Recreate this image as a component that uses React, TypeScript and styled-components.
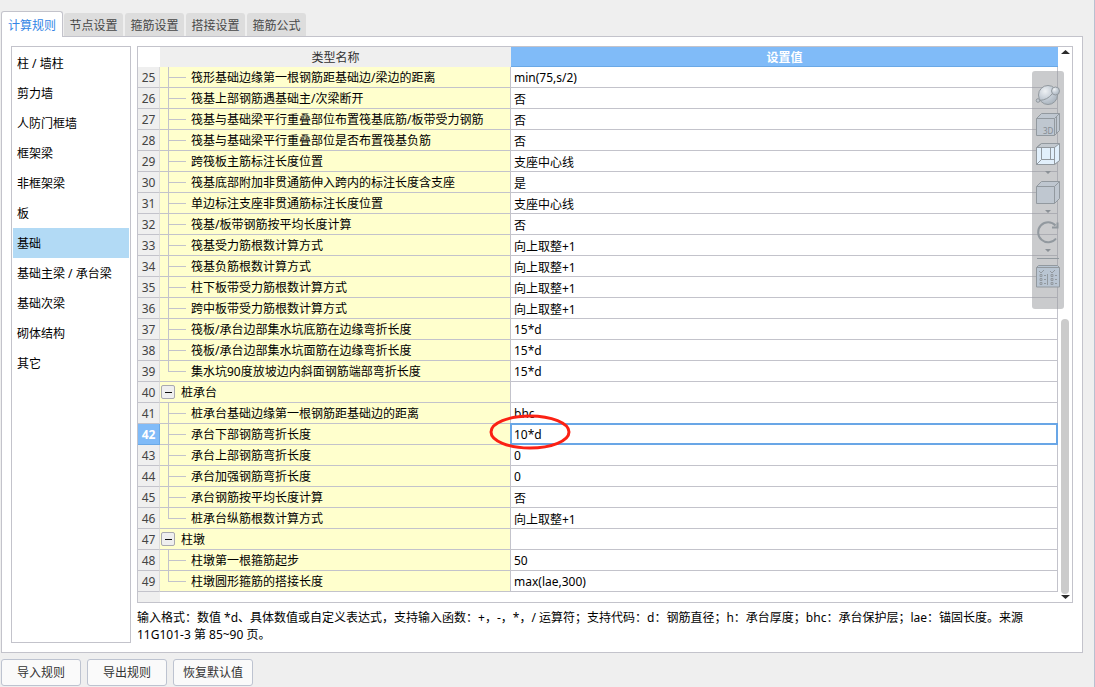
import React, { useState } from "react";
import styled, { createGlobalStyle, css } from "styled-components";

const line = "#c3c3cb";
const blue = "#80bbf8";

const GlobalStyle = createGlobalStyle`
  *, *::before, *::after { box-sizing: border-box; }
  body {
    margin: 0;
    background: #efefef;
    color: #000;
    font: 12px/20px "Noto Sans", "Noto Sans CJK SC", sans-serif;
  }
  button { font: inherit; color: inherit; cursor: pointer; }
`;

const Window = styled.main`
  display: flex;
  flex-direction: column;
  min-height: 100vh;
  padding: 11px 11px 2px 1px;
  border-right: 1px solid #b9c0d0;
  overflow: hidden;
`;

const Tabs = styled.div`
  display: flex;
  align-items: flex-end;
  gap: 2px;
  height: 26px;
`;

const Tab = styled.button<{ $active: boolean }>`
  width: 59px;
  height: 23px;
  padding: 2px 0 0;
  margin-bottom: 1px;
  border: 0;
  border-radius: 3px 3px 0 0;
  background: #dddddd;
  color: #484848;
  ${(p) =>
    p.$active &&
    css`
      position: relative;
      width: 62px;
      height: 26px;
      margin-bottom: 0;
      margin-right: -1px;
      border: 1px solid ${line};
      border-bottom: 0;
      background: #fff;
      color: #3385e5;
    `}
`;

const Panel = styled.section`
  display: flex;
  flex: 1;
  gap: 6px;
  margin-top: -1px;
  padding: 9px;
  border: 1px solid ${line};
  background: #fff;
`;

const Categories = styled.nav`
  display: flex;
  flex-direction: column;
  flex: none;
  width: 120px;
  padding: 1px;
  border: 1px solid ${line};
`;

const Category = styled.button<{ $selected: boolean }>`
  height: 30px;
  padding: 2px 4px 0;
  border: 0;
  background: ${(p) => (p.$selected ? "#b2daf5" : "#fff")};
  text-align: left;
`;

const Content = styled.div`
  flex: 1;
  min-width: 0;
`;

const GridFrame = styled.div`
  position: relative;
  display: flex;
  border: 1px solid ${line};
`;

const Sheet = styled.table`
  flex: 1;
  border-collapse: separate;
  border-spacing: 0;
  table-layout: fixed;
`;

const NumberCol = styled.col`
  width: 22px;
`;
const NameCol = styled.col`
  width: 351px;
`;

const HeadCell = styled.th<{ $active?: boolean }>`
  height: 20px;
  padding: 2px 0 0;
  line-height: 17px;
  font-weight: ${(p) => (p.$active ? 700 : 400)};
  background: ${(p) => (p.$active ? blue : "#efefef")};
  color: ${(p) => (p.$active ? "#fff" : "#333")};
  border-bottom: 1px solid ${(p) => (p.$active ? "#6aa8e6" : "#efefef")};
`;

const Corner = styled.td`
  padding: 0;
  background: #fff;
`;

const RowNumber = styled.th<{ $active: boolean }>`
  height: 21px;
  padding: 2px 0 0;
  line-height: 18px;
  font-weight: ${(p) => (p.$active ? 700 : 400)};
  color: ${(p) => (p.$active ? "#fff" : "#444")};
  background: ${(p) => (p.$active ? blue : "#efefef")};
  border-bottom: 1px solid ${(p) => (p.$active ? "#6aa8e6" : line)};
  border-right: 1px solid ${(p) => (p.$active ? "#6aa8e6" : "#dcdcdc")};
`;

const NameCell = styled.td`
  height: 21px;
  padding: 0;
  background: #ffffcd;
  border-right: 1px solid ${line};
  border-bottom: 1px solid ${line};
`;

const NameLine = styled.div`
  display: flex;
  align-items: center;
  height: 20px;
  white-space: nowrap;
`;

const NameText = styled.span`
  padding-top: 2px;
  line-height: 18px;
`;

const Branch = styled.span<{ $last: boolean }>`
  flex: none;
  width: 18px;
  height: 20px;
  margin: 0 5px 0 8px;
  background:
    linear-gradient(${line}, ${line}) 0 0 / 1px ${(p) => (p.$last ? "11px" : "20px")} no-repeat,
    linear-gradient(${line}, ${line}) 0 10px / 18px 1px no-repeat;
`;

const Toggle = styled.button`
  flex: none;
  display: flex;
  align-items: center;
  justify-content: center;
  width: 14px;
  height: 14px;
  margin: 0 6px 0 1px;
  padding: 0;
  border: 1px solid #a9a9b0;
  border-radius: 2px;
  background: #efefef;
  &::before {
    content: "";
    width: 7px;
    height: 1px;
    background: #111;
  }
`;

const ValueCell = styled.td`
  height: 21px;
  padding: 0;
  border-right: 1px solid ${line};
  border-bottom: 1px solid ${line};
`;

const ValueInput = styled.input<{ $active: boolean }>`
  display: block;
  width: 100%;
  height: 20px;
  padding: 1px 3px 0;
  border: 0;
  outline: 0;
  background: transparent;
  color: #000;
  font: inherit;
  line-height: 18px;
  box-shadow: ${(p) => (p.$active ? "0 0 0 1px #69a6e6, inset 0 0 0 1px #69a6e6" : "none")};
`;

const FootCell = styled.td<{ $gutter?: boolean }>`
  height: 10px;
  padding: 0;
  background: ${(p) => (p.$gutter ? "#efefef" : "#fff")};
`;

const Scrollbar = styled.div`
  display: flex;
  flex-direction: column;
  align-items: center;
  flex: none;
  width: 14px;
  padding: 3px 0;
`;

const Track = styled.div`
  display: flex;
  flex: 1;
  align-items: flex-end;
  padding-bottom: 1px;
`;

const Thumb = styled.div`
  width: 8px;
  height: 51%;
  border-radius: 4px;
  background: #cbcbcb;
`;

const ViewTools = styled.div`
  position: absolute;
  top: 24px;
  right: 8px;
  display: flex;
  flex-direction: column;
  width: 32px;
  height: 238px;
  border-radius: 3px;
  background: rgba(150, 152, 155, 0.5);
`;

const Ring = styled.svg`
  position: absolute;
  top: 366px;
  left: 351px;
  pointer-events: none;
`;

const Hint = styled.p`
  margin: 6px 0 0;
  padding-right: 32px;
  line-height: 17px;
`;

const Actions = styled.footer`
  display: flex;
  gap: 6px;
  padding-top: 6px;
`;

const ActionButton = styled.button`
  width: 80px;
  height: 27px;
  padding: 0;
  border: 1px solid #bdc3d0;
  border-radius: 3px;
  background: #fafafa;
  color: #333;
`;

const tabs = ["计算规则", "节点设置", "箍筋设置", "搭接设置", "箍筋公式"];
const categories = ["柱 / 墙柱", "剪力墙", "人防门框墙", "框架梁", "非框架梁", "板", "基础", "基础主梁 / 承台梁", "基础次梁", "砌体结构", "其它"];

type Kind = "item" | "last" | "group";
type Row = [number, string, string, Kind];

const rows: Row[] = [
  [25, "筏形基础边缘第一根钢筋距基础边/梁边的距离", "min(75,s/2)", "item"],
  [26, "筏基上部钢筋遇基础主/次梁断开", "否", "item"],
  [27, "筏基与基础梁平行重叠部位布置筏基底筋/板带受力钢筋", "否", "item"],
  [28, "筏基与基础梁平行重叠部位是否布置筏基负筋", "否", "item"],
  [29, "跨筏板主筋标注长度位置", "支座中心线", "item"],
  [30, "筏基底部附加非贯通筋伸入跨内的标注长度含支座", "是", "item"],
  [31, "单边标注支座非贯通筋标注长度位置", "支座中心线", "item"],
  [32, "筏基/板带钢筋按平均长度计算", "否", "item"],
  [33, "筏基受力筋根数计算方式", "向上取整+1", "item"],
  [34, "筏基负筋根数计算方式", "向上取整+1", "item"],
  [35, "柱下板带受力筋根数计算方式", "向上取整+1", "item"],
  [36, "跨中板带受力筋根数计算方式", "向上取整+1", "item"],
  [37, "筏板/承台边部集水坑底筋在边缘弯折长度", "15*d", "item"],
  [38, "筏板/承台边部集水坑面筋在边缘弯折长度", "15*d", "item"],
  [39, "集水坑90度放坡边内斜面钢筋端部弯折长度", "15*d", "last"],
  [40, "桩承台", "", "group"],
  [41, "桩承台基础边缘第一根钢筋距基础边的距离", "bhc", "item"],
  [42, "承台下部钢筋弯折长度", "10*d", "item"],
  [43, "承台上部钢筋弯折长度", "0", "item"],
  [44, "承台加强钢筋弯折长度", "0", "item"],
  [45, "承台钢筋按平均长度计算", "否", "item"],
  [46, "桩承台纵筋根数计算方式", "向上取整+1", "last"],
  [47, "柱墩", "", "group"],
  [48, "柱墩第一根箍筋起步", "50", "item"],
  [49, "柱墩圆形箍筋的搭接长度", "max(lae,300)", "last"],
];

const Arrow = ({ down }: { down?: boolean }) => (
  <svg width="9" height="4" aria-hidden="true">
    <path d={down ? "M0 0h9L4.500 4z" : "M0 4h9L4.500 0z"} fill="#2b2b2b" />
  </svg>
);

const ViewIcons = () => (
  <svg width="32" height="238" fill="none" stroke="#92999f" role="img" aria-label="视图工具">
    <defs>
      <radialGradient id="ball" cx="0.35" cy="0.3" r="0.75">
        <stop offset="0" stopColor="#eef1f4" />
        <stop offset="0.55" stopColor="#c5cdd6" />
        <stop offset="1" stopColor="#a9b3bd" />
      </radialGradient>
    </defs>
    <circle cx="16" cy="24" r="9.500" fill="url(#ball)" />
    <circle cx="6" cy="29.500" r="1.800" fill="#c4cad0" />
    <path d="M7.500 29.500C13 29 17 27 20 23" />
    <circle cx="23.500" cy="20" r="4" fill="url(#ball)" />
    <g strokeLinejoin="round">
      <path d="M4.500 47.500l5-5h18v17l-5 5h-18z" fill="#bfc7d0" />
      <path d="M4.500 47.500h18v17M22.500 47.500l5-5M24.500 45.500v17" />
      <path d="M4.500 76.500l5-4h18v17l-5 4h-18z" fill="#c3c9cf" />
      <path d="M4.500 76.500h18v17h-18zM22.500 76.500l5-4v17l-5 4z" fill="#e2f0fc" />
      <path d="M9.500 77v11.500h12.500M9.500 88.500l-5 5M18.500 77v12M9.500 72.500l-5 4" />
      <path d="M4.500 115.500l5-5h18v17l-5 5h-18z" fill="#bfc7d0" />
      <path d="M4.500 115.500h18v17M22.500 115.500l5-5" />
    </g>
    <text x="11" y="63" fontSize="8" fill="#858c93" stroke="none">3D</text>
    <path d="M13 100h6l-3 3zM13 139h6l-3 3zM13 178h6l-3 3z" fill="#8b9197" stroke="none" />
    <path d="M23.500 154.500A10 10 0 1 0 24 167.500" strokeWidth="2" />
    <path d="M20 156.500h5.500v-5" strokeWidth="2" />
    <path d="M5 187.500h22" />
    <path d="M4.500 196.500l2-2h19l2 2v19.500h-23z" fill="#b9c5d2" />
    <path d="M4.500 196.500h23M15.500 203v11M7 200l2 2 3-3M18 200l2 2 3-3" />
    <path d="M8 203.500h2v2h-2zM8 207.500h2v2h-2zM8 211.500h2v2h-2zM19 203.500h2v2h-2zM19 207.500h2v2h-2zM19 211.500h2v2h-2zM12 204.500h2M12 208.500h2M12 212.500h2M23 204.500h2M23 208.500h2M23 212.500h2" />
  </svg>
);

export default function App() {
  const [tab, setTab] = useState(0);
  const [category, setCategory] = useState(6);
  return (
    <Window>
      <GlobalStyle />
      <Tabs role="tablist">
        {tabs.map((name, i) => (
          <Tab key={name} role="tab" aria-selected={i === tab} $active={i === tab} onClick={() => setTab(i)}>
            {name}
          </Tab>
        ))}
      </Tabs>
      <Panel>
        <Categories>
          {categories.map((name, i) => (
            <Category key={name} $selected={i === category} onClick={() => setCategory(i)}>
              {name}
            </Category>
          ))}
        </Categories>
        <Content>
          <GridFrame>
            <Sheet>
              <colgroup>
                <NumberCol />
                <NameCol />
                <col />
              </colgroup>
              <thead>
                <tr>
                  <Corner />
                  <HeadCell>类型名称</HeadCell>
                  <HeadCell $active>设置值</HeadCell>
                </tr>
              </thead>
              <tbody>
                {rows.map(([n, name, value, kind]) => (
                  <tr key={n}>
                    <RowNumber $active={n === 42}>{n}</RowNumber>
                    <NameCell>
                      <NameLine>
                        {kind === "group" ? <Toggle aria-label={"折叠" + name} /> : <Branch $last={kind === "last"} />}
                        <NameText>{name}</NameText>
                      </NameLine>
                    </NameCell>
                    <ValueCell>
                      <ValueInput $active={n === 42} aria-label={name} defaultValue={value} />
                    </ValueCell>
                  </tr>
                ))}
                <tr>
                  <FootCell $gutter />
                  <FootCell />
                  <FootCell />
                </tr>
              </tbody>
            </Sheet>
            <Scrollbar>
              <Arrow />
              <Track>
                <Thumb />
              </Track>
              <Arrow down />
            </Scrollbar>
            <ViewTools>
              <ViewIcons />
            </ViewTools>
            <Ring width="82" height="38" fill="none" aria-hidden="true">
              <ellipse cx="41" cy="19" rx="39" ry="16" stroke="#fb2114" strokeWidth="3" />
            </Ring>
          </GridFrame>
          <Hint>
            输入格式：数值 *d、具体数值或自定义表达式，支持输入函数：+，-，*，/ 运算符；支持代码：d：钢筋直径；h：承台厚度；bhc：承台保护层；lae：锚固长度。来源 11G101-3 第 85~90 页。
          </Hint>
        </Content>
      </Panel>
      <Actions>
        <ActionButton>导入规则</ActionButton>
        <ActionButton>导出规则</ActionButton>
        <ActionButton>恢复默认值</ActionButton>
      </Actions>
    </Window>
  );
}
